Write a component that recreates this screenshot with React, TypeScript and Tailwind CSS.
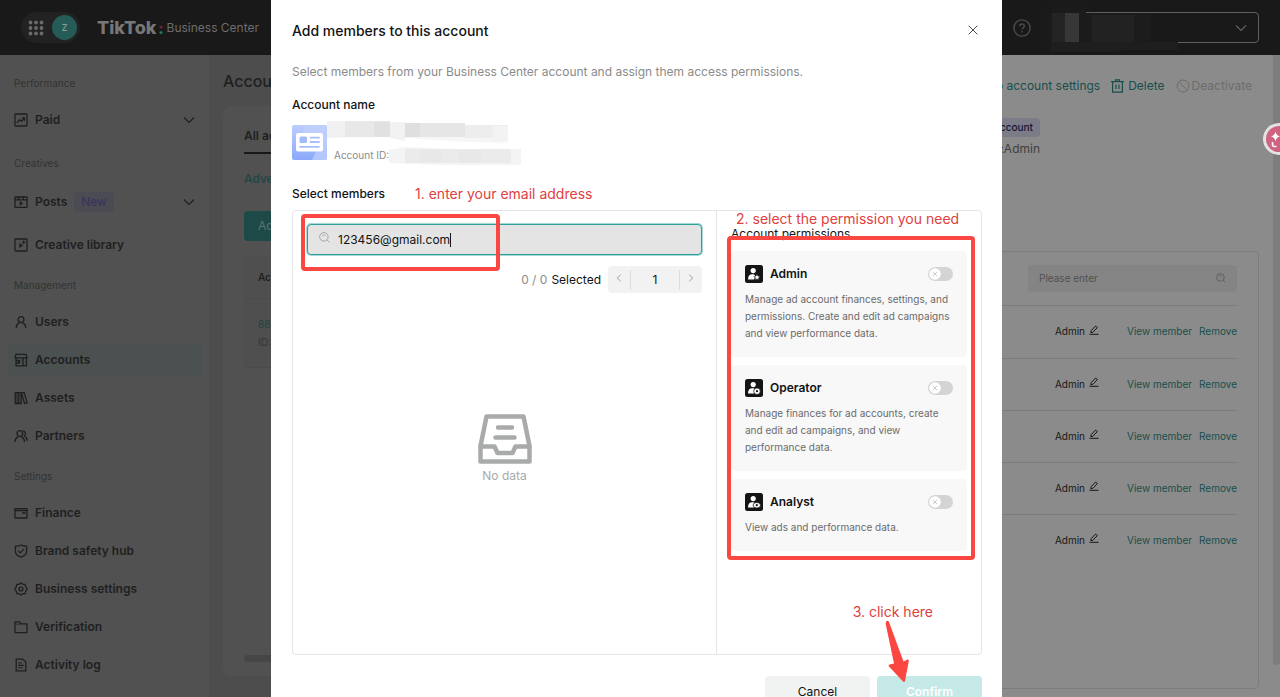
import { useState } from "react";
import type { ReactNode } from "react";
import clsx from "clsx";

interface NavItem {
  label: string;
  icon: ReactNode;
  active?: boolean;
  badge?: string;
  expandable?: boolean;
}

interface NavSection {
  title: string;
  items: NavItem[];
}

interface Permission {
  id: string;
  name: string;
  description: string;
  mark: ReactNode;
}

const Glyph = ({ children }: { children: ReactNode }) => (
  <svg
    viewBox="0 0 14 14"
    className="h-3.5 w-3.5 shrink-0"
    fill="none"
    stroke="currentColor"
    strokeWidth="1.3"
    strokeLinejoin="round"
    strokeLinecap="round"
    aria-hidden="true"
  >
    {children}
  </svg>
);

const sections: NavSection[] = [
  {
    title: "Performance",
    items: [
      {
        label: "Paid",
        expandable: true,
        icon: (
          <Glyph>
            <rect x="1" y="1" width="12" height="12" rx="0.8" />
            <path d="M3.3 9.4 5.6 6.8l2 1.4L10.4 5M8.2 4.8h2.3v2.4" />
          </Glyph>
        ),
      },
    ],
  },
  {
    title: "Creatives",
    items: [
      {
        label: "Posts",
        badge: "New",
        expandable: true,
        icon: (
          <Glyph>
            <rect x="1" y="2" width="12" height="10.4" rx="0.6" />
            <path d="M1 4.8h12M4.6 2v2.6M9.2 2v2.6" />
            <path d="M6 6.8v3.4l2.7-1.7z" fill="currentColor" strokeWidth="0.6" />
          </Glyph>
        ),
      },
      {
        label: "Creative library",
        icon: (
          <Glyph>
            <rect x="1" y="1" width="12" height="12" rx="0.8" />
            <path d="M5.6 5.6v4l3.2-2z" fill="currentColor" strokeWidth="0.5" />
            <path d="M9.7 3v2.6M8.4 4.3H11" strokeWidth="1" />
          </Glyph>
        ),
      },
    ],
  },
  {
    title: "Management",
    items: [
      {
        label: "Users",
        icon: (
          <Glyph>
            <circle cx="7" cy="4.6" r="2.9" />
            <path d="M2.3 12.6c0-2.6 1.3-4.1 3-4.8M11.7 12.6c0-2.6-1.3-4.1-3-4.8" />
          </Glyph>
        ),
      },
      {
        label: "Accounts",
        active: true,
        icon: (
          <Glyph>
            <path d="M1.9 1.4h10.2L13 4.8H1z" />
            <path d="M2 5v7.8h10.4V5M9 5v7.6M2.2 7.4h3.4v2.6H2.2M4.3 8.7h.2" />
          </Glyph>
        ),
      },
      {
        label: "Assets",
        icon: (
          <Glyph>
            <path d="M1.2 1.6h3v10.9h-3zM4.2 1.6h3v10.9h-3zM7.6 2l2.6-.7 2.9 10.5-2.6.8z" />
            <path d="M2.7 1.8v10.4M5.7 1.8v10.4" strokeWidth="0.6" />
          </Glyph>
        ),
      },
      {
        label: "Partners",
        icon: (
          <Glyph>
            <circle cx="5.8" cy="4.6" r="2.9" />
            <path d="M1.1 12.6c0-2.6 1.3-4.1 3-4.8M10.4 12.6c0-2.6-1.3-4.1-3-4.8M9.6 1.8c2.1.9 2.4 3.7.8 5.2 1.6.9 2.6 2.4 2.7 4.4" />
          </Glyph>
        ),
      },
    ],
  },
  {
    title: "Settings",
    items: [
      {
        label: "Finance",
        icon: (
          <Glyph>
            <rect x="1" y="2.6" width="12" height="9.4" rx="0.5" />
            <path d="M1 4.6h12M8.6 7h2.6" strokeWidth="1.5" />
          </Glyph>
        ),
      },
      {
        label: "Brand safety hub",
        icon: (
          <Glyph>
            <path d="M7 1c1.7 1.1 3.6 1.3 5.6 1.2v5.3c0 2.7-2.3 4.5-5.6 5.6-3.3-1.1-5.6-2.9-5.6-5.6V2.2C3.4 2.3 5.3 2.1 7 1z" />
            <path d="m4.4 7.1 1.9 1.8 3.3-3.5" />
          </Glyph>
        ),
      },
      {
        label: "Business settings",
        icon: (
          <Glyph>
            <path d="M7 .9 8.9 2.3l2.3.1.5 2.3L13.2 7l-1.5 2.3-.5 2.3-2.3.1L7 13.1l-1.9-1.4-2.3-.1-.5-2.3L.8 7l1.5-2.3.5-2.3 2.3-.1z" />
            <circle cx="7" cy="7" r="1.9" />
          </Glyph>
        ),
      },
      {
        label: "Verification",
        icon: (
          <Glyph>
            <path d="M1 12.6V1.9h4.7l1.5 2h5.8v8.7z" />
            <path d="M1 4.1h5" strokeWidth="0.8" />
          </Glyph>
        ),
      },
      {
        label: "Activity log",
        icon: (
          <Glyph>
            <path d="M2.2 1.1h6.6l3 2.9v8.9H2.2z" />
            <path d="M4.6 5h3M4.6 7.4h4.8M4.6 9.8h3.6" strokeWidth="1.1" />
          </Glyph>
        ),
      },
    ],
  },
];

const permissions: Permission[] = [
  {
    id: "admin",
    name: "Admin",
    description:
      "Manage ad account finances, settings, and permissions. Create and edit ad campaigns and view performance data.",
    mark: (
      <path
        d="m12 9.2 1 1.9 2.1.3-1.5 1.5.4 2.1-2-1-2 1 .4-2.1-1.5-1.5 2.1-.3z"
        fill="#fff"
        stroke="#121415"
        strokeWidth="0.6"
      />
    ),
  },
  {
    id: "operator",
    name: "Operator",
    description:
      "Manage finances for ad accounts, create and edit ad campaigns, and view performance data.",
    mark: (
      <>
        <circle cx="12" cy="12.2" r="3.3" fill="#fff" stroke="#121415" strokeWidth="0.8" />
        <circle cx="12" cy="12.2" r="1.1" fill="#121415" />
      </>
    ),
  },
  {
    id: "analyst",
    name: "Analyst",
    description: "View ads and performance data.",
    mark: (
      <>
        <ellipse cx="11.8" cy="12.2" rx="3.7" ry="2.8" fill="#fff" stroke="#121415" strokeWidth="0.8" />
        <circle cx="11.8" cy="12.2" r="1.1" fill="#121415" />
      </>
    ),
  },
];

const memberRows = [1, 2, 3, 4, 5];

const Chevron = ({ className }: { className?: string }) => (
  <svg viewBox="0 0 12 8" className={className} fill="none" stroke="currentColor" strokeWidth="1.2" aria-hidden="true">
    <path d="m1 1.5 5 5 5-5" />
  </svg>
);

const SearchIcon = ({ className }: { className?: string }) => (
  <svg viewBox="0 0 12 12" className={className} fill="none" stroke="currentColor" strokeWidth="1" aria-hidden="true">
    <circle cx="5.3" cy="5.3" r="4.6" />
    <path d="m8.6 8.6 2.7 2.7M3.7 3.9c.8-.7 2.4-.7 3.2 0" />
  </svg>
);

const Header = () => (
  <header className="flex h-[55px] items-center bg-[#191919] px-[21px]">
    <div className="flex h-[31px] w-[59px] items-center justify-between rounded-full bg-[#222222] pr-[3px] pl-[7px]">
      <button aria-label="Apps">
        <svg viewBox="0 0 16 16" className="h-4 w-4" fill="#6a6a6a">
          {[2.5, 8, 13.5].map((y) =>
            [2.5, 8, 13.5].map((x) => <circle key={`${x}-${y}`} cx={x} cy={y} r="1.9" />)
          )}
        </svg>
      </button>
      <span className="flex h-[25px] w-[25px] items-center justify-center rounded-full bg-[#265c57] text-[11px] text-[#8a9a98]">
        z
      </span>
    </div>
    <div className="ml-[17px] flex items-center text-[#777777]">
      <span className="text-lg font-extrabold">TikTok</span>
      <svg viewBox="0 0 4 10" className="mt-1 ml-0.5 h-2.5 w-1" aria-hidden="true">
        <circle cx="2" cy="2" r="1.6" fill="#6b2533" />
        <circle cx="2" cy="7.5" r="1.6" fill="#27706c" />
      </svg>
      <span className="ml-1 text-xs text-[#6d6d6d]">Business Center</span>
    </div>
    <div className="ml-auto flex items-center gap-[21px]">
      <button aria-label="Help">
        <svg viewBox="0 0 18 18" className="h-[18px] w-[18px]" fill="none" stroke="#4b4b4b" strokeWidth="1.4">
          <circle cx="9" cy="9" r="8.1" />
          <path d="M6.7 7.3c0-3 4.7-2.9 4.7-.2 0 1.8-2.4 1.7-2.4 3.5M9 12v1.5" />
        </svg>
      </button>
      <button
        aria-label="Switch account"
        className="relative flex h-[31px] w-[207px] items-center justify-end rounded border border-[#606060] pr-[11px] text-[#606060]"
      >
        <svg viewBox="0 0 140 48" className="absolute -top-2 -left-1.5 h-12 w-[140px]" aria-hidden="true">
          <path d="M4 2h35v10H84v34H4V38H0V8h4z" fill="#1b1b1b" />
          <path d="M39 9h65v31H39z" fill="#1c1c1c" />
          <path d="M4 37h127v8H72v2H4z" fill="#1e1e1e" />
          <path d="M5 8h13v29H5z" fill="#242424" />
          <path d="M18 8h14v29H18z" fill="#373737" />
          <path d="M45 10h42v27H45z" fill="#222222" />
        </svg>
        <Chevron className="h-2 w-3" />
      </button>
    </div>
  </header>
);

const Sidebar = () => (
  <nav className="w-[209px] shrink-0 bg-[#515151] px-[7px] pt-5">
    {sections.map((section) => (
      <div key={section.title} className="pb-[11px]">
        <h3 className="px-[7px] text-[10px] leading-4 text-[#333333]">{section.title}</h3>
        <ul className="mt-3">
          {section.items.map((item) => (
            <li key={item.label}>
              <a
                href="#"
                className={clsx(
                  "flex items-center rounded px-[7px] text-xs font-semibold text-[#1f1f1f]",
                  item.badge ? "h-[38px]" : "h-[34px]",
                  item.expandable ? "mb-[7px]" : "mb-1",
                  item.active && "bg-[#4a5150]"
                )}
              >
                {item.icon}
                <span className="ml-[7px]">{item.label}</span>
                {item.badge && (
                  <span className="ml-[7px] rounded bg-[#4b4b53] px-[7px] leading-5 font-normal text-[#37325c]">
                    {item.badge}
                  </span>
                )}
                {item.expandable && <Chevron className="ml-auto h-2 w-3" />}
              </a>
            </li>
          ))}
        </ul>
      </div>
    ))}
  </nav>
);

const AccountList = () => (
  <main className="min-w-0 flex-1 overflow-hidden bg-[#4d4d4d] pl-3.5 whitespace-nowrap">
    <h1 className="mt-3.5 text-base leading-6 font-medium text-[#1f1f1f]">Accounts</h1>
    <section className="mt-[13px] flex h-[570px] flex-col rounded-lg bg-[#515151] pl-[21px]">
      <div className="mt-5 border-b-2 border-[#181818] pb-1.5 text-xs leading-5 font-semibold text-[#1f1f1f]">
        All accounts
      </div>
      <a href="#" className="mt-[15px] text-xs leading-5 font-medium text-[#1e4542]">
        Advertiser accounts
      </a>
      <button className="mt-[22px] h-[30px] rounded bg-[#1d4a47] pl-3.5 text-left text-xs text-[#5b7472]">
        Add advertiser account
      </button>
      <div className="mt-[15px] bg-[#4f4f4f] text-[10px]">
        <div className="border-b border-[#4b4b4b] pl-3.5 leading-[42px] font-semibold text-[#1f1f1f]">Account</div>
        <div className="flex flex-col border-b border-[#4b4b4b] py-4 pl-3.5 leading-[18px]">
          <a href="#" className="text-[#1e4542]">8888</a>
          <span className="text-[#333333]">ID: 8888</span>
        </div>
      </div>
      <div className="mt-auto mb-3.5 h-[7px] rounded-full bg-[#464646]" />
    </section>
  </main>
);

const PencilIcon = () => (
  <svg viewBox="0 0 10 10" className="mb-1 h-2.5 w-2.5" fill="none" stroke="#171717" strokeWidth="1" aria-hidden="true">
    <path d="M1.8 7.6 2.2 5.6 6.6 1l1.8 1.5-4.5 4.8zM.5 9.3h9" />
  </svg>
);

const AccountDetail = () => (
  <aside className="flex w-[640px] shrink-0 bg-[#8b8b8b] text-[#171717]">
    <div className="flex min-w-0 flex-1 flex-col items-end pr-3.5">
      <div className="mt-[21px] mr-[7px] flex items-center gap-[11px] text-xs leading-5 text-[#184f4b]">
        <a href="#">Go to account settings</a>
        <button className="flex items-center gap-1">
          <svg viewBox="0 0 13 14" className="h-3.5 w-[13px]" fill="none" stroke="currentColor" strokeWidth="1.2" aria-hidden="true">
            <path d="M0 2.7h13M4.5 2.5V.8h4v1.7M1.6 2.8v10.4h9.8V2.8M5 5.5v4.5M8 5.5v4.5" />
          </svg>
          Delete
        </button>
        <button className="flex items-center gap-0.5 text-[#6c6c6c]" disabled>
          <svg viewBox="0 0 14 14" className="h-3.5 w-3.5" fill="none" stroke="currentColor" aria-hidden="true">
            <circle cx="7" cy="7" r="6" />
            <path d="m3.4 3.4 7.2 7.2" />
          </svg>
          Deactivate
        </button>
      </div>
      <div className="mt-[22px] mr-[219px] flex flex-col items-end">
        <span className="rounded bg-[#7c7c88] px-[7px] text-[10px] leading-[19px] font-medium text-[#151332]">
          Ad account
        </span>
        <span className="mt-0.5 text-xs leading-5 text-[#404040]">Role:Admin</span>
      </div>
      <section className="mt-[92px] h-[438px] w-full rounded border border-[#7c7c7c] pr-[21px]">
        <div className="flex justify-end border-b border-[#7c7c7c] py-[13px]">
          <label className="flex h-[27px] w-[209px] items-center rounded bg-[#848484] px-[11px]">
            <input
              aria-label="Search members"
              placeholder="Please enter"
              className="min-w-0 flex-1 bg-transparent text-[10px] outline-none placeholder:text-[#505050]"
            />
            <SearchIcon className="mb-0.5 h-2.5 w-2.5 text-[#5b5b5b]" />
          </label>
        </div>
        <table className="w-full text-[10px]">
          <tbody>
            {memberRows.map((row) => (
              <tr key={row} className="h-[52px] border-b border-[#7c7c7c] last:border-b-0">
                <td>
                  <div className="flex items-center justify-end gap-1">
                    Admin
                    <button aria-label="Edit role">
                      <PencilIcon />
                    </button>
                  </div>
                </td>
                <td className="w-[138px]">
                  <div className="flex justify-end gap-[7px] text-[#184f4b]">
                    <a href="#">View member</a>
                    <a href="#">Remove</a>
                  </div>
                </td>
              </tr>
            ))}
          </tbody>
        </table>
      </section>
    </div>
    <div className="h-[610px] w-[7px] rounded-b-full bg-[#7d7d7d]" />
  </aside>
);

const PermissionCard = ({ permission }: { permission: Permission }) => {
  const [enabled, setEnabled] = useState(false);

  return (
    <li className="rounded bg-[#f8f8f8] px-3.5 pt-3.5 pb-[15px]">
      <div className="flex items-center">
        <svg viewBox="0 0 18 18" className="h-[18px] w-[18px]" aria-hidden="true">
          <rect width="18" height="18" rx="2.5" fill="#121415" />
          <circle cx="8.2" cy="5.6" r="2.6" fill="#fff" />
          <path d="M3 14.5c0-3.4 1.5-5.3 4.2-5.3 1.6 0 2.4.5 3 1.3l-1 4z" fill="#fff" />
          {permission.mark}
        </svg>
        <label htmlFor={permission.id} className="ml-[7px] text-xs leading-[18px] font-semibold text-[#121415]">
          {permission.name}
        </label>
        <span className="relative ml-auto flex h-3.5 w-[25px] items-center rounded-full bg-[#d3d4d5] px-px">
          <input
            id={permission.id}
            type="checkbox"
            role="switch"
            checked={enabled}
            onChange={(e) => setEnabled(e.target.checked)}
            className="absolute inset-0 cursor-pointer appearance-none"
          />
          <svg viewBox="0 0 12 12" className={clsx("h-3 w-3", enabled && "ml-auto")} aria-hidden="true">
            <circle cx="6" cy="6" r="5.8" fill="#fff" />
            <path d="m3.8 3.8 4.4 4.4m0-4.4L3.8 8.2" stroke="#c9cacb" />
          </svg>
        </span>
      </div>
      <p className="mt-2 text-[10px] leading-[17px] text-[#6b6b6b]">{permission.description}</p>
    </li>
  );
};

const AddMembersDialog = () => {
  const [query, setQuery] = useState("123456@gmail.com");

  return (
    <div
      role="dialog"
      aria-labelledby="dialog-title"
      className="relative w-[731px] bg-white pt-[21px] pr-5 pb-8 pl-[21px] text-[#121415]"
    >
      <div className="flex h-5 items-center justify-between">
        <h2 id="dialog-title" className="text-sm font-medium">
          Add members to this account
        </h2>
        <button aria-label="Close" className="mr-1 mb-0.5">
          <svg viewBox="0 0 10 10" className="h-2.5 w-2.5" stroke="#4a4a4a" aria-hidden="true">
            <path d="m.7.7 8.600 8.600m0-8.600L.7 9.300" />
          </svg>
        </button>
      </div>
      <p className="mt-[21px] text-xs leading-5 text-[#8a8b8c]">
        Select members from your Business Center account and assign them access permissions.
      </p>
      <h3 className="mt-[13px] text-xs leading-5 font-medium">Account name</h3>
      <div className="mt-1.5 flex h-12 items-start">
        <svg viewBox="0 0 35 35" className="mt-1 h-[35px] w-[35px]" aria-hidden="true">
          <defs>
            <linearGradient id="tile" x1="0" y1="0" x2="0" y2="1">
              <stop offset="0" stopColor="#bccdff" />
              <stop offset="1" stopColor="#8ba9fb" />
            </linearGradient>
          </defs>
          <rect width="35" height="35" rx="2" fill="url(#tile)" />
          <path d="M14 0h19a2 2 0 0 1 2 2v31a2 2 0 0 1-2 2H20l4-9V8H10z" fill="#c3d1fd" opacity="0.7" />
          <rect x="4" y="8" width="27" height="18.5" rx="2" fill="#fff" />
          <rect x="7.5" y="11.5" width="7.5" height="6.5" rx="1.5" fill="#a3bbfc" />
          <path d="M18.500 12.700H27M18.500 17H27M8 21.800h19" stroke="#a9bffc" strokeWidth="1.8" strokeLinecap="round" />
        </svg>
        <span className="mt-[26px] ml-[7px] text-[10px] leading-4 text-[#8a8b8c]">Account ID:</span>
        {/* redacted account name and id */}
        <svg viewBox="0 0 195 48" className="-ml-[62px] h-12 w-[195px]" aria-hidden="true">
          <path d="M0 0h63v16H28L0 17z" fill="#f1f1f2" />
          <path d="M18 0h45v16H18z" fill="#e8e8e9" />
          <path d="M47 1h16v15H47z" fill="#e1e1e1" />
          <path d="M63 1h15v19l-15-3z" fill="#f2f2f2" />
          <path d="M78 2h60v14H78z" fill="#e6e6e6" />
          <path d="M78 16h102v6l-40-1-62-4z" fill="#f6f6f6" />
          <path d="M78 2h15v14H78z" fill="#dfdfdf" />
          <path d="M138 4h43v13h-43z" fill="#ededee" />
          <path d="M166 5h15v15h-15z" fill="#f3f3f3" />
          <path d="M62 29l16-3 50 2h66v16h-80l-52-2z" fill="#f4f4f4" />
          <path d="M78 28h106v14H78z" fill="#ebebeb" />
          <path d="M93 29h22v12H93zM132 29h22v13h-22z" fill="#e8e8e9" />
        </svg>
      </div>
      <div className="mt-[15px] flex items-center gap-[30px]">
        <h3 className="text-xs leading-5 font-medium">Select members</h3>
        <span className="text-sm leading-5 text-[#e0413e]">1. enter your email address</span>
      </div>

      <div className="mt-1.5 flex h-[445px] rounded border border-[#e4e5e6]">
        <div className="flex-1 border-r border-[#e4e5e6] px-3.5 pt-[13px]">
          <div className="relative">
            <div className="flex h-[31px] items-center rounded border border-[#2f9f9a] bg-[#e4e4e4] px-[11px] shadow-[0_0_0_1px_#a5d9d6]">
              <SearchIcon className="mb-1 h-[11px] w-[11px] text-[#a0a0a0]" />
              <input
                aria-label="Search members by email"
                value={query}
                onChange={(e) => setQuery(e.target.value)}
                size={13}
                className="ml-2 field-sizing-content bg-transparent text-xs outline-none"
              />
              <span className="h-3.5 w-px bg-[#121415]" />
            </div>
            <div className="pointer-events-none absolute -top-2.5 -left-1.5 h-[57px] w-[199px] rounded border-4 border-[#fa4742]" />
          </div>
          <div className="mt-[11px] flex items-center justify-end text-xs">
            <span className="text-[#8a8b8c]">0 / 0</span>
            <span className="ml-1">Selected</span>
            <div className="ml-[7px] flex h-[27px] w-[94px] items-center rounded bg-[#f2f2f2]">
              <button aria-label="Previous page" className="flex h-5 w-[23px] items-center justify-center border-r border-[#dcdcdc]">
                <Chevron className="mb-1 h-1.5 w-2 rotate-90 text-[#8a8b8c]" />
              </button>
              <span className="flex-1 text-center">1</span>
              <button aria-label="Next page" className="flex h-5 w-[23px] items-center justify-center border-l border-[#dcdcdc]">
                <Chevron className="mb-1 h-1.5 w-2 -rotate-90 text-[#8a8b8c]" />
              </button>
            </div>
          </div>
          <div className="mt-[121px] flex flex-col items-center">
            <svg
              viewBox="0 0 54 50"
              className="h-[50px] w-[54px]"
              fill="none"
              stroke="#a9aaab"
              strokeWidth="4.5"
              strokeLinejoin="round"
              strokeLinecap="round"
              aria-hidden="true"
            >
              <path d="M8.500 2.500h37L51.500 32v15.500h-49V32z" />
              <path d="M2.500 32.500h14l3 6.500h15l3-6.500h14" />
              <path d="M20 13.500h14M17.500 23.500h19" />
            </svg>
            <span className="mt-0.5 text-xs leading-5 text-[#a9aaab]">No data</span>
          </div>
        </div>

        <div className="w-[264px] px-3.5">
          <p className="-mt-px pl-[5px] text-sm leading-[17px] whitespace-nowrap text-[#e0413e]">
            2. select the permission you need
          </p>
          <h3 className="text-xs leading-3.5">Account permissions</h3>
          <div className="relative mt-2.5">
            <ul className="flex flex-col gap-2">
              {permissions.map((permission) => (
                <PermissionCard key={permission.id} permission={permission} />
              ))}
            </ul>
            <div className="pointer-events-none absolute -top-[15px] -right-2 -bottom-[9px] -left-1 rounded border-4 border-[#fa4742]" />
          </div>
        </div>
      </div>

      <div className="relative mt-[21px] flex justify-end gap-[7px] text-xs">
        <button className="h-8 w-[105px] rounded bg-[#f1f3f3]">Cancel</button>
        <button className="h-8 w-[105px] rounded bg-[#c4e9e7] font-semibold text-white">Confirm</button>
        <div className="pointer-events-none absolute right-[49px] bottom-[26px] flex flex-col items-center">
          <span className="text-sm leading-5 text-[#e0413e]">3. click here</span>
          <svg viewBox="0 0 24 62" className="-mt-0.5 ml-2 h-[62px] w-6" fill="#fa4742" aria-hidden="true">
            <path d="M1 1.500Q3 0 4 2l14.500 39.500 4-2q1.500-.5 1.300 1.500L20 61q-.6 1.700-2 .5L4 46.500q-1-1.500.5-2l4.500-1L.7 4z" />
          </svg>
        </div>
      </div>
    </div>
  );
};

export default function App() {
  return (
    <div className="relative flex h-screen flex-col overflow-hidden font-['Inter','Liberation_Sans',sans-serif]">
      <Header />
      <div className="flex min-h-0 flex-1">
        <Sidebar />
        <AccountList />
        <AccountDetail />
      </div>

      <div className="absolute inset-0 flex items-start justify-center overflow-hidden pr-[7px]">
        <AddMembersDialog />
      </div>

      <button
        aria-label="Assistant"
        className="absolute top-[123px] -right-[15px] flex h-8 w-8 items-center justify-center rounded-full bg-[#e3e3e3]"
      >
        <svg viewBox="0 0 26 26" className="h-[26px] w-[26px]" aria-hidden="true">
          <circle cx="13" cy="13" r="13" fill="#cf6482" />
          <path d="M9.500 5.500q.7 4 4.500 5-3.800.8-4.500 5-.7-4.200-4.500-5 3.800-1 4.500-5z" fill="#fff" />
          <path d="M6.500 16v2.500q0 2 2 2h2" stroke="#fff" strokeWidth="1.6" fill="none" />
        </svg>
      </button>
    </div>
  );
}
